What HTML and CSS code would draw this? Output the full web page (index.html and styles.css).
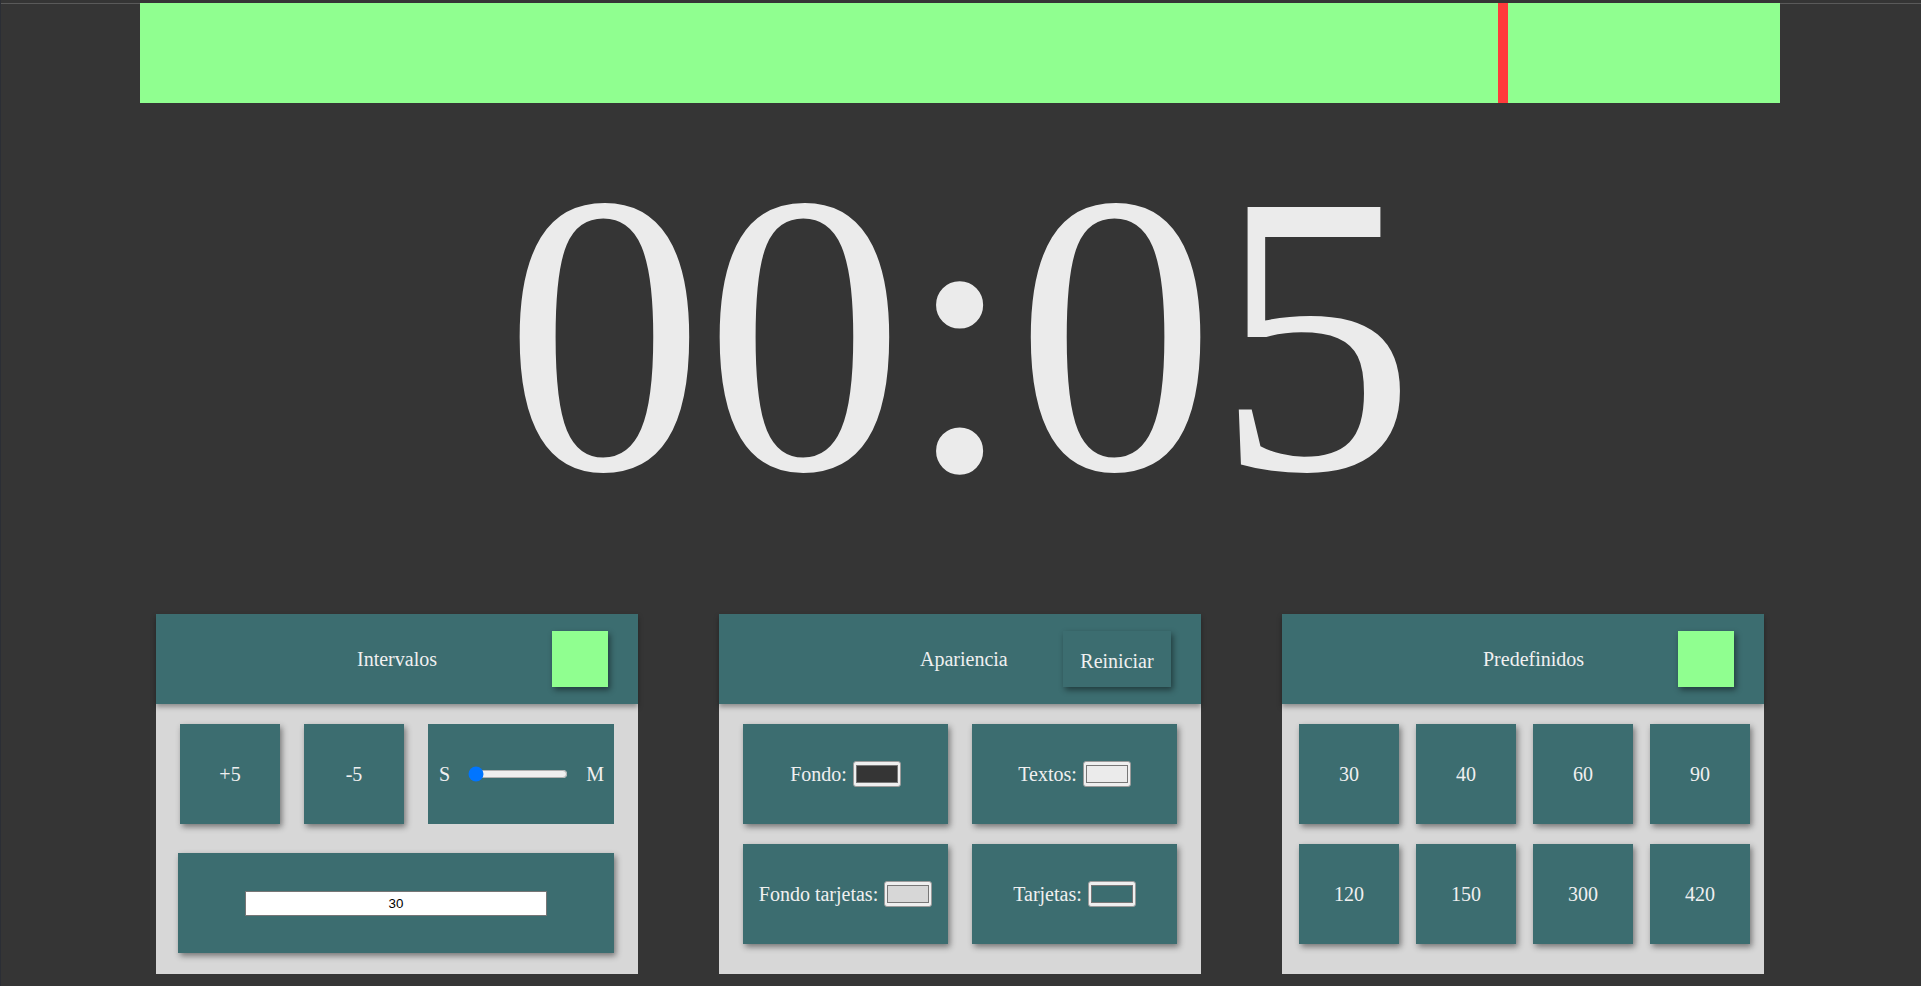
FILE: index.html
```html
<!DOCTYPE html>
<html lang="es">
<head>
<meta charset="utf-8">
<title>Temporizador</title>
<link rel="stylesheet" href="styles.css">
</head>
<body>
<div class="rule"></div>
<div class="app">
  <div class="bar">
    <div class="marker" style="left: 82.8%"></div>
  </div>
  <div class="timer">00:05</div>
  <div class="panels">
    <section class="panel">
      <header class="panel-head">
        <span class="panel-title">Intervalos</span>
        <span class="indicator"></span>
      </header>
      <div class="panel-body body-intervals">
        <div class="row">
          <div class="card sq">+5</div>
          <div class="card sq">-5</div>
          <div class="card flat slider-card">
            <span>S</span>
            <input class="range" type="range" min="0" max="1" step="1" value="0">
            <span>M</span>
          </div>
        </div>
        <div class="card wide">
          <input class="num" type="text" value="30">
        </div>
      </div>
    </section>
    <section class="panel">
      <header class="panel-head">
        <span class="panel-title">Apariencia</span>
        <button class="reset">Reiniciar</button>
      </header>
      <div class="panel-body grid-2">
        <div class="card">Fondo: <input class="swatch" type="color" value="#353535"></div>
        <div class="card">Textos: <input class="swatch" type="color" value="#ebebeb"></div>
        <div class="card">Fondo tarjetas: <input class="swatch" type="color" value="#d7d7d7"></div>
        <div class="card">Tarjetas: <input class="swatch" type="color" value="#3c6d70"></div>
      </div>
    </section>
    <section class="panel">
      <header class="panel-head">
        <span class="panel-title">Predefinidos</span>
        <span class="indicator"></span>
      </header>
      <div class="panel-body grid-4">
        <div class="card sq">30</div>
        <div class="card sq">40</div>
        <div class="card sq">60</div>
        <div class="card sq">90</div>
        <div class="card sq">120</div>
        <div class="card sq">150</div>
        <div class="card sq">300</div>
        <div class="card sq">420</div>
      </div>
    </section>
  </div>
</div>
</body>
</html>
```
FILE: styles.css
```css
html, body {
  margin: 0;
  padding: 0;
}
body {
  background: #353535;
  font-family: "Liberation Serif", "Times New Roman", serif;
  color: #ececec;
  height: 986px;
  overflow: hidden;
  border-left: 1px solid #2b2e35;
  box-sizing: border-box;
  padding-top: 3px;
}
.rule {
  height: 1px;
  background: #5a5a5a;
}
.app {
  width: 1640px;
  margin: 0 auto;
  position: relative;
  left: -1px;
}
.bar {
  height: 100px;
  background: #90ff90;
  position: relative;
  margin-top: -1px;
}
.marker {
  position: absolute;
  top: 0;
  bottom: 0;
  width: 10px;
  background: #ff3b3b;
}
.timer {
  margin-top: 82px;
  height: 300px;
  line-height: 300px;
  font-family: "Liberation Serif", "Times New Roman", serif;
  font-size: 400px;
  text-align: center;
  color: #ebebeb;
  white-space: nowrap;
}
.panels {
  margin-top: 129px;
  display: flex;
  justify-content: space-between;
  padding: 0 16px;
}
.panel {
  width: 482px;
  height: 360px;
  background: #d7d7d7;
  display: flex;
  flex-direction: column;
}
.panel-head {
  height: 90px;
  flex: none;
  background: #3c6d70;
  display: flex;
  align-items: center;
  padding: 0 30px 0 201px;
  box-shadow: 0 3px 5px rgba(0, 0, 0, 0.35);
  position: relative;
  z-index: 1;
}
.panel-title {
  font-size: 20px;
  color: #f0f0f0;
}
.indicator {
  margin-left: auto;
  width: 56px;
  height: 56px;
  background: #90ff90;
  box-shadow: 2px 3px 6px rgba(0, 0, 0, 0.45);
}
.reset {
  margin-left: auto;
  width: 108px;
  height: 56px;
  border: none;
  background: #3c6d70;
  color: #f0f0f0;
  font-family: "Liberation Serif", "Times New Roman", serif;
  font-size: 20px;
  padding: 4px 0 0;
  box-shadow: 2px 3px 6px rgba(0, 0, 0, 0.45);
}
.panel-body {
  flex: 1;
}
.card {
  background: #3c6d70;
  color: #f0f0f0;
  font-size: 20px;
  display: flex;
  align-items: center;
  justify-content: center;
  gap: 6px;
  height: 100px;
  box-shadow: 2px 3px 6px rgba(0, 0, 0, 0.45);
}
.card.flat {
  box-shadow: none;
}
.sq {
  width: 100px;
}
.body-intervals {
  padding: 20px 24px;
  display: flex;
  flex-direction: column;
  gap: 29px;
}
.row {
  display: flex;
  gap: 24px;
}
.slider-card {
  width: 186px;
  box-sizing: border-box;
  padding: 0 10px 0 11px;
  justify-content: space-between;
  gap: 0;
}
.range {
  width: 100px;
  margin: 0 2px;
}
.wide {
  width: 436px;
  align-self: flex-end;
}
.num {
  width: 302px;
  height: 25px;
  box-sizing: border-box;
  border: 1px solid #767676;
  background: #ffffff;
  font-family: "Liberation Sans", Arial, sans-serif;
  font-size: 13.33px;
  color: #000;
  text-align: center;
  padding: 0;
  outline: none;
}
.grid-2 {
  display: grid;
  grid-template-columns: 205px 205px;
  column-gap: 24px;
  row-gap: 20px;
  padding: 20px 24px;
  align-content: start;
}
.grid-4 {
  display: grid;
  grid-template-columns: repeat(4, 100px);
  column-gap: 17px;
  row-gap: 20px;
  padding: 20px 17px;
  align-content: start;
}
.swatch {
  width: 48px;
  height: 26px;
  box-sizing: border-box;
  padding: 0;
  border: 1px solid #9a9a9a;
  border-radius: 3px;
  background: #efefef;
  cursor: pointer;
}
.swatch::-webkit-color-swatch-wrapper {
  padding: 3px 2px;
}
.swatch::-webkit-color-swatch {
  border: 1px solid #777777;
  border-radius: 0;
}
```
